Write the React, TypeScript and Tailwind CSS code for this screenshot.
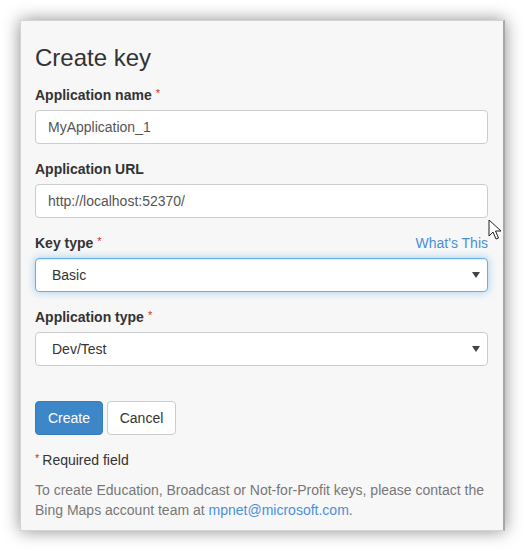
import React from "react";

const Star = () => (
  <sup className="text-[#e0262f] text-[11px] font-normal relative -top-[3px] ml-[4px]">*</sup>
);

const Caret = () => (
  <svg width="8" height="6" viewBox="0 0 8 6" className="ml-auto mr-[7px]">
    <path d="M0 0 L8 0 L4 6 Z" fill="#444" />
  </svg>
);

export default function App() {
  return (
    <div className="relative w-[525px] h-[551px] bg-white p-[20px] font-['Liberation_Sans',Arial,sans-serif] text-[14px] leading-[20px] text-[#333]">
      <div className="w-[485px] h-[511px] bg-[#f7f7f7] border border-[#d4d4d4] border-r-2 border-r-[#a8a8a8] shadow-[0_0_16px_rgba(0,0,0,0.45)] pl-[14px] pr-[15px] pt-[24px] flex flex-col">
        <h3 className="text-[24px] leading-[26.4px] text-[#333] mb-[14px]">Create key</h3>

        <div className="flex flex-col gap-[5px] mb-[15px]">
          <label className="font-bold">
            Application name
            <Star />
          </label>
          <div className="h-[34px] bg-white border border-[#ccc] rounded-[4px] px-[12px] flex items-center text-[#555]">
            MyApplication_1
          </div>
        </div>

        <div className="flex flex-col gap-[5px] mb-[15px]">
          <label className="font-bold">Application URL</label>
          <div className="h-[34px] bg-white border border-[#ccc] rounded-[4px] px-[12px] flex items-center text-[#555]">
            http://localhost:52370/
          </div>
        </div>

        <div className="flex flex-col gap-[5px] mb-[15px]">
          <div className="flex justify-between">
            <label className="font-bold">
              Key type
              <Star />
            </label>
            <a className="text-[#4a90d9]">What's This</a>
          </div>
          <div className="h-[34px] bg-white border border-[#66afe9] rounded-[4px] pl-[16px] flex items-center text-[#333] shadow-[inset_0_1px_1px_rgba(0,0,0,0.075),0_0_8px_rgba(102,175,233,0.6)]">
            Basic
            <Caret />
          </div>
        </div>

        <div className="flex flex-col gap-[5px] mb-[35px]">
          <label className="font-bold">
            Application type
            <Star />
          </label>
          <div className="h-[34px] bg-white border border-[#ccc] rounded-[4px] pl-[16px] flex items-center text-[#333]">
            Dev/Test
            <Caret />
          </div>
        </div>

        <div className="flex gap-[4px] mb-[15px]">
          <button className="h-[34px] w-[68px] bg-[#3d87c9] border border-[#357ebd] rounded-[4px] text-white">
            Create
          </button>
          <button className="h-[34px] w-[69px] bg-white border border-[#ccc] rounded-[4px] text-[#333]">
            Cancel
          </button>
        </div>

        <p className="mb-[10px]">
          <sup className="text-[#e0262f] text-[11px] relative -top-[3px] mr-[3px]">*</sup>
          Required field
        </p>

        <p className="text-[#777]">
          To create Education, Broadcast or Not-for-Profit keys, please contact the Bing Maps account team at{" "}
          <a className="text-[#4a90d9]">mpnet@microsoft.com</a>.
        </p>
      </div>

      <svg width="14" height="22" viewBox="0 0 14 22" className="absolute left-[488px] top-[219px]">
        <path d="M1 1 L1 17 L5 13 L8 20 L10.5 19 L7.5 12 L13 12 Z" fill="white" stroke="#222" strokeWidth="1" strokeLinejoin="round" />
      </svg>
    </div>
  );
}
